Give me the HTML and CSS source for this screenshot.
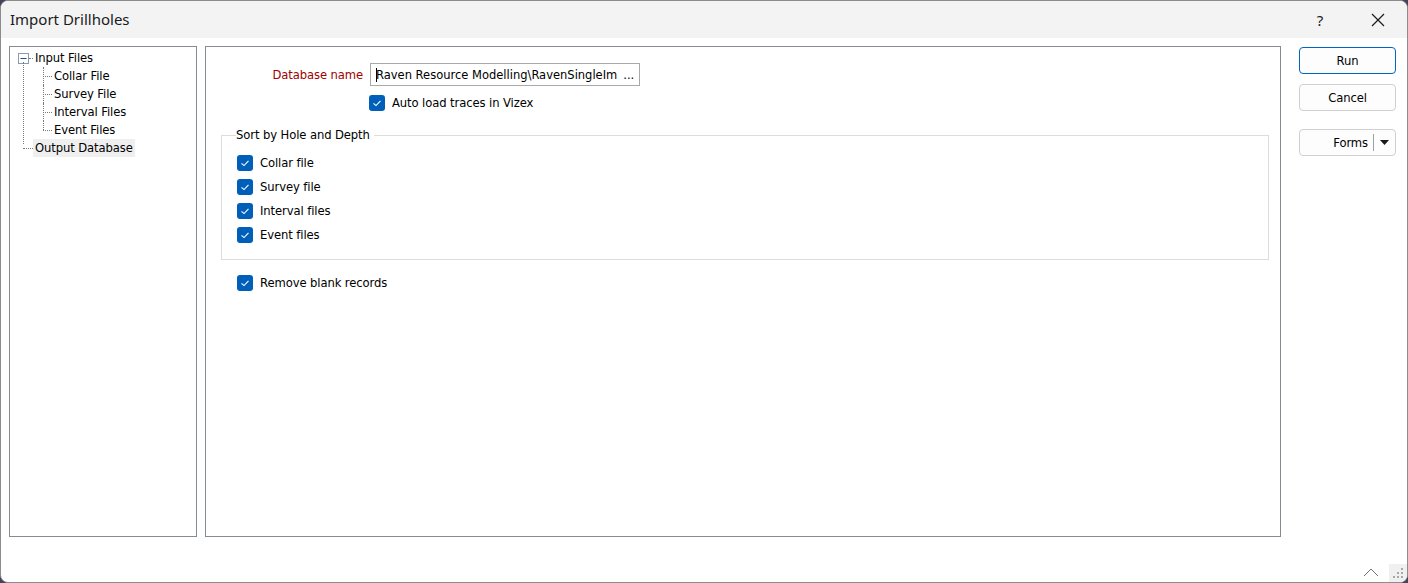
FILE: index.html
```html
<!DOCTYPE html>
<html>
<head>
<meta charset="utf-8">
<link rel="stylesheet" href="styles.css">
</head>
<body>
<div class="window">
  <div class="titlebar">
    <div class="title">Import Drillholes</div>
    <div class="tb-btn help">?</div>
    <div class="tb-btn close">
      <svg width="14" height="14" viewBox="0 0 14 14"><path d="M1 1L13 13M13 1L1 13" stroke="#1a1a1a" stroke-width="1.2" fill="none"/></svg>
    </div>
  </div>
  <div class="content">
    <div class="tree">
      <div class="tree-row root first">
        <span class="expander"><svg width="11" height="11" viewBox="0 0 11 11"><rect x="0.5" y="0.5" width="10" height="10" fill="#fff" stroke="#8a9ab0"/><path d="M2.5 5.5H8.5" stroke="#2a4a80" stroke-width="1"/></svg></span>
        <span class="dots-h short"></span>
        <span class="label">Input Files</span>
      </div>
      <div class="children">
        <div class="tree-row child"><span class="dots-h"></span><span class="label">Collar File</span></div>
        <div class="tree-row child"><span class="dots-h"></span><span class="label">Survey File</span></div>
        <div class="tree-row child"><span class="dots-h"></span><span class="label">Interval Files</span></div>
        <div class="tree-row child last"><span class="dots-h"></span><span class="label">Event Files</span></div>
      </div>
      <div class="tree-row root last-root"><span class="dots-h long"></span><span class="label selected">Output Database</span></div>
    </div>
    <div class="main">
      <div class="db-row">
        <span class="db-label">Database name</span>
        <div class="db-input"><span class="caret"></span>Raven Resource Modelling\RavenSingleIm<span class="ellipsis">...</span></div>
      </div>
      <div class="check-row auto"><span class="cb"></span><span>Auto load traces in Vizex</span></div>
      <fieldset class="group">
        <legend>Sort by Hole and Depth</legend>
        <div class="check-row"><span class="cb"></span><span>Collar file</span></div>
        <div class="check-row"><span class="cb"></span><span>Survey file</span></div>
        <div class="check-row"><span class="cb"></span><span>Interval files</span></div>
        <div class="check-row"><span class="cb"></span><span>Event files</span></div>
      </fieldset>
      <div class="check-row remove"><span class="cb"></span><span>Remove blank records</span></div>
    </div>
    <div class="buttons">
      <button class="btn default">Run</button>
      <button class="btn">Cancel</button>
      <button class="btn forms"><span class="forms-text">Forms</span><span class="sep"></span><svg width="9" height="5" viewBox="0 0 9 5"><path d="M0 0H9L4.5 5Z" fill="#1a1a1a"/></svg></button>
    </div>
  </div>
  <div class="statusbar">
    <svg class="chev" width="16" height="9" viewBox="0 0 16 9"><path d="M1 8L8 1L15 8" stroke="#707070" stroke-width="1" fill="none"/></svg>
    <div class="grip">
      <svg width="14" height="14" viewBox="0 0 14 14" fill="#a8a8a8">
        <rect x="10" y="2" width="2" height="2"/>
        <rect x="6" y="6" width="2" height="2"/><rect x="10" y="6" width="2" height="2"/>
        <rect x="2" y="10" width="2" height="2"/><rect x="6" y="10" width="2" height="2"/><rect x="10" y="10" width="2" height="2"/>
      </svg>
    </div>
  </div>
</div>
</body>
</html>
```
FILE: styles.css
```css
* { box-sizing: border-box; }
html, body { margin: 0; padding: 0; }
body {
  background: #45425a;
  width: 1408px;
  height: 583px;
  overflow: hidden;
  font-family: "DejaVu Sans", "Noto Sans", sans-serif;
}
.window {
  width: 1408px;
  height: 583px;
  background: #fff;
  border: 1px solid #8c8c8c;
  border-radius: 8px;
  overflow: hidden;
  display: flex;
  flex-direction: column;
}
.titlebar {
  height: 37px;
  flex: none;
  background: #f3f3f3;
  display: flex;
  align-items: center;
  padding-left: 9px;
}
.title {
  font-family: "Noto Sans", "Open Sans", sans-serif;
  font-size: 15px;
  color: #1a1a1a;
  flex: 1;
  padding-bottom: 1px;
}
.tb-btn {
  display: flex;
  align-items: center;
  justify-content: center;
  color: #1a1a1a;
}
.help {
  font-family: "Noto Sans", sans-serif;
  font-size: 15px;
  width: 20px;
  margin-right: 41px;
}
.close { width: 14px; margin-right: 22px; }
.content {
  flex: 1;
  display: flex;
  padding: 8px 11px 0 8px;
  gap: 8px;
  font-family: "DejaVu Sans", sans-serif;
  font-size: 11.6px;
  letter-spacing: -0.1px;
  color: #000;
}
.tree {
  width: 188px;
  height: 491px;
  border: 1px solid #868b93;
  padding: 2px 0 0 8px;
}
.tree-row {
  height: 18px;
  display: flex;
  align-items: center;
  position: relative;
}
.expander { width: 11px; height: 11px; display: flex; }
.dots-h {
  width: 9px;
  height: 1px;
  border-top: 1px dotted #7a7a7a;
  margin-right: 2px;
}
.dots-h.short { width: 4px; margin-right: 0; }
.children {
  margin-left: 25px;
}
.tree-row.child::before {
  content: "";
  position: absolute;
  left: 0;
  top: 0;
  height: 18px;
  border-left: 1px dotted #7a7a7a;
}
.tree-row.child.last::before { height: 9px; }
.root .label { padding: 0 2px; }
.children .label { padding: 0 2px 0 0; }
.tree-row.root.first::after {
  content: "";
  position: absolute;
  left: 5px;
  top: 13px;
  height: 82px;
  border-left: 1px dotted #7a7a7a;
}
.dots-h.long { margin-left: 5px; width: 10px; margin-right: 0; }
.label.selected { background: #efefef; line-height: 18px; }
.main {
  width: 1076px;
  height: 491px;
  border: 1px solid #868b93;
  padding: 16px 0 0 15px;
}
.db-row {
  display: flex;
  align-items: center;
  height: 23px;
}
.db-label {
  width: 149px;
  text-align: right;
  color: #a00000;
  padding-right: 7px;
}
.db-input {
  width: 270px;
  height: 23px;
  border: 1px solid #a9a9a9;
  display: flex;
  align-items: center;
  padding-left: 5px;
  color: #000;
  white-space: nowrap;
  position: relative;
  font-size: 11.5px;
  letter-spacing: 0;
}
.caret {
  width: 1px;
  height: 14px;
  background: #000;
  position: absolute;
  left: 5px;
  top: 4px;
}
.ellipsis { margin-left: 6px; }
.check-row {
  display: flex;
  align-items: center;
  height: 24px;
  gap: 7px;
}
.cb {
  width: 16px;
  height: 16px;
  border-radius: 3px;
  background: #005fb8 url("data:image/svg+xml,%3Csvg xmlns='http://www.w3.org/2000/svg' width='16' height='16' viewBox='0 0 16 16'%3E%3Cpath d='M4.5 8.3L7 10.6L11.5 5.8' stroke='white' stroke-width='1.1' fill='none'/%3E%3C/svg%3E") no-repeat center;
  flex: none;
}
.check-row.auto { margin-left: 148px; margin-top: 5px; }
.group {
  margin: 13px 0 0 0;
  width: 1048px;
  height: 132px;
  border: 1px solid #dcdcdc;
  padding: 9px 0 0 15px;
}
.group legend {
  padding: 0 4px 0 0;
  margin-left: -1px;
  line-height: 14px;
}
.group .check-row { margin-left: 0; }
.check-row.remove { margin-left: 16px; margin-top: 11px; }
.buttons {
  display: flex;
  flex-direction: column;
  margin-left: 10px;
  padding-top: 1px;
  width: 97px;
}
.btn {
  width: 97px;
  height: 27px;
  background: #fdfdfd;
  border: 1px solid #d0d0d0;
  border-radius: 4px;
  font-family: "DejaVu Sans", sans-serif;
  font-size: 11.6px;
  letter-spacing: -0.1px;
  color: #000;
  padding: 0;
  margin-bottom: 10px;
}
.btn.default { border-color: #0067c0; }
.btn.forms {
  margin-top: 8px;
  display: flex;
  align-items: center;
  justify-content: flex-end;
  padding-right: 6px;
}
.forms-text { margin-right: 5px; }
.sep { width: 1px; height: 17px; background: #a0a0a0; margin-right: 6px; }
.statusbar {
  height: 18px;
  flex: none;
  display: flex;
  justify-content: flex-end;
  align-items: flex-end;
}
.chev { margin-right: 10px; margin-bottom: 5px; }
.grip {
  width: 18px;
  height: 18px;
  background: #f0f0f0;
  display: flex;
  align-items: flex-end;
  justify-content: flex-end;
  padding: 0 2px 2px 0;
}
```
